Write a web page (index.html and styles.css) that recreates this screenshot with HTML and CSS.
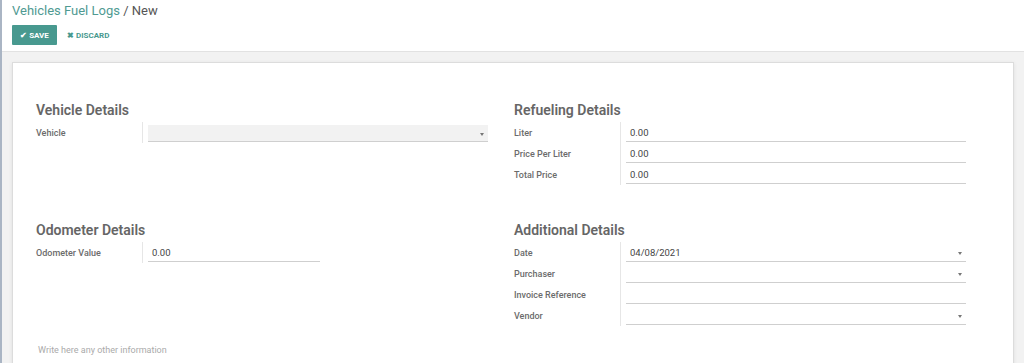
FILE: index.html
```html
<!DOCTYPE html>
<html lang="en">
<head>
    <meta charset="UTF-8">
    <meta name="viewport" content="width=device-width, initial-scale=1.0">
    <title>Vehicles Fuel Logs / New</title>
    <link rel="stylesheet" href="styles.css">
</head>
<body>

<div class="app">
    <div class="control-panel">
        <div class="breadcrumb">
            <a href="#" class="crumb">Vehicles Fuel Logs</a>
            <span class="sep">/</span>
            <span class="current">New</span>
        </div>
        <div class="buttons">
            <button class="btn-save">&#10004; SAVE</button>
            <button class="btn-discard">&#10006; DISCARD</button>
        </div>
    </div>

    <div class="content">
        <div class="sheet">
            <div class="groups">
                <div class="group">
                    <h3>Vehicle Details</h3>
                    <div class="row">
                        <label>Vehicle</label>
                        <div class="field select required"><span class="caret"></span></div>
                    </div>
                </div>

                <div class="group">
                    <h3>Refueling Details</h3>
                    <div class="row">
                        <label>Liter</label>
                        <div class="field">0.00</div>
                    </div>
                    <div class="row">
                        <label>Price Per Liter</label>
                        <div class="field">0.00</div>
                    </div>
                    <div class="row">
                        <label>Total Price</label>
                        <div class="field">0.00</div>
                    </div>
                </div>

                <div class="group">
                    <h3>Odometer Details</h3>
                    <div class="row">
                        <label>Odometer Value</label>
                        <div class="field short">0.00</div>
                    </div>
                </div>

                <div class="group">
                    <h3>Additional Details</h3>
                    <div class="row">
                        <label>Date</label>
                        <div class="field select">04/08/2021<span class="caret"></span></div>
                    </div>
                    <div class="row">
                        <label>Purchaser</label>
                        <div class="field select"><span class="caret"></span></div>
                    </div>
                    <div class="row">
                        <label>Invoice Reference</label>
                        <div class="field"></div>
                    </div>
                    <div class="row">
                        <label>Vendor</label>
                        <div class="field select"><span class="caret"></span></div>
                    </div>
                </div>
            </div>

            <div class="note">Write here any other information</div>
        </div>
    </div>
</div>

</body>
</html>
```

FILE: styles.css
```css
body {
    margin: 0;
    font-family: Roboto, "Liberation Sans", sans-serif;
    background: #f2f2f2;
    color: #555;
    height: 363px;
    overflow: hidden;
}

.app {
    border-left: 2px solid #aab5c4;
    min-height: 363px;
}

/* top bar */
.control-panel {
    background: white;
    height: 51px;
    padding: 0 10px;
    border-bottom: 1px solid #e2e2e2;
}

.breadcrumb {
    padding-top: 3px;
    font-size: 13px;
    line-height: 16px;
}

.crumb {
    color: #4f9a92;
    text-decoration: none;
}

.sep, .current {
    color: #555;
}

.buttons {
    display: flex;
    align-items: center;
    margin-top: 6px;
}

.btn-save, .btn-discard {
    font-family: Roboto, "Liberation Sans", sans-serif;
    font-size: 8px;
    font-weight: bold;
    border: none;
    cursor: pointer;
}

.btn-save {
    background: #48998f;
    color: white;
    width: 45px;
    height: 20px;
    padding: 0;
    border-radius: 1px;
}

.btn-discard {
    background: none;
    color: #48998f;
    margin-left: 4px;
}

/* form */
.content {
    padding: 10px 10px 0 10px;
}

.sheet {
    background: white;
    border: 1px solid #dcdcdc;
    box-shadow: 0 1px 4px rgba(0, 0, 0, 0.08);
    min-height: 300px;
    padding: 37px 23px 0 23px;
}

.groups {
    display: grid;
    grid-template-columns: 478px 478px;
    row-gap: 35px;
}

.group h3 {
    margin: 0 0 2px 0;
    font-size: 14px;
    line-height: 20px;
    font-weight: 600;
    color: #666;
}

.row {
    display: flex;
    height: 21px;
}

.row label {
    width: 107px;
    font-size: 9px;
    font-weight: 500;
    color: #6b6b6b;
    line-height: 20px;
    padding-top: 1px;
    box-sizing: border-box;
    border-right: 1px solid #e6e6e6;
}

.field {
    position: relative;
    margin-left: 5px;
    width: 340px;
    height: 20px;
    border-bottom: 1px solid #cfcfcf;
    font-size: 9.5px;
    line-height: 22px;
    padding-left: 4px;
    box-sizing: border-box;
    color: #444;
}

.field.short {
    width: 172px;
}

.field.required {
    background: #f2f2f2;
    height: 17px;
    margin-top: 3px;
}

.caret {
    position: absolute;
    right: 4px;
    top: 50%;
    border-top: 3px solid #777;
    border-left: 2px solid transparent;
    border-right: 2px solid transparent;
}

.note {
    margin-top: 19px;
    padding-left: 2px;
    font-size: 9px;
    color: #aaa;
}
```
